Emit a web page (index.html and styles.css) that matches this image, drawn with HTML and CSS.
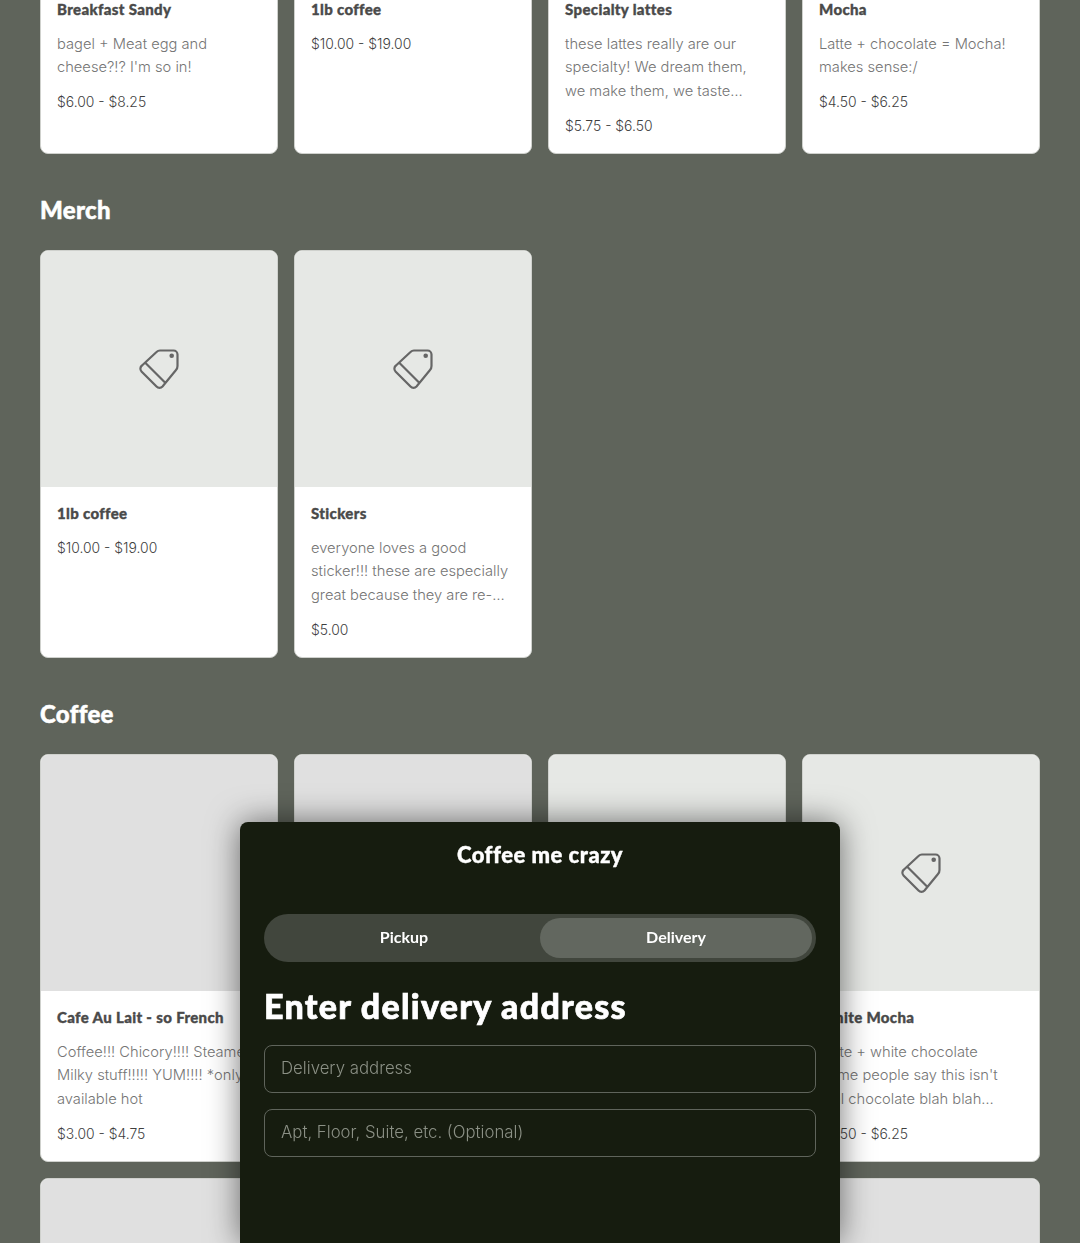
FILE: index.html
```html
<!DOCTYPE html>
<html lang="en">
<head>
    <meta charset="UTF-8">
    <meta name="viewport" content="width=device-width, initial-scale=1.0">
    <title>Coffee me crazy</title>
    <link rel="stylesheet" href="styles.css">
</head>
<body>
    <main class="menu">
        <section class="menu-section">
            <div class="item-grid">
                <div class="item-card">
                    <div class="item-image"></div>
                    <div class="item-body">
                        <h3 class="item-title">Breakfast Sandy</h3>
                        <p class="item-desc">bagel + Meat egg and<br>cheese?!? I'm so in!</p>
                        <div class="item-price">$6.00 - $8.25</div>
                    </div>
                </div>
                <div class="item-card">
                    <div class="item-image"></div>
                    <div class="item-body">
                        <h3 class="item-title">1lb coffee</h3>
                        <div class="item-price">$10.00 - $19.00</div>
                    </div>
                </div>
                <div class="item-card">
                    <div class="item-image"></div>
                    <div class="item-body">
                        <h3 class="item-title">Specialty lattes</h3>
                        <p class="item-desc">these lattes really are our<br>specialty! We dream them,<br>we make them, we taste…</p>
                        <div class="item-price">$5.75 - $6.50</div>
                    </div>
                </div>
                <div class="item-card">
                    <div class="item-image"></div>
                    <div class="item-body">
                        <h3 class="item-title">Mocha</h3>
                        <p class="item-desc">Latte + chocolate = Mocha!<br>makes sense:/</p>
                        <div class="item-price">$4.50 - $6.25</div>
                    </div>
                </div>
            </div>
        </section>

        <section class="menu-section">
            <h2 class="section-title">Merch</h2>
            <div class="item-grid">
                <div class="item-card">
                    <div class="item-image placeholder">
                        <svg class="tag-icon" viewBox="0 0 40 40"><path d="M3 16.5 17.5 3Q19 1.5 21 1.5H34.5A4 4 0 0 1 38.5 5.5V17Q38.5 19.5 37 21L23.5 37.5A4 4 0 0 1 17.5 37.5L2.5 22.5A4 4 0 0 1 3 16.5ZM6 13.5 26 33.5"/><circle cx="32.7" cy="6.7" r="1.2"/></svg>
                    </div>
                    <div class="item-body">
                        <h3 class="item-title">1lb coffee</h3>
                        <div class="item-price">$10.00 - $19.00</div>
                    </div>
                </div>
                <div class="item-card">
                    <div class="item-image placeholder">
                        <svg class="tag-icon" viewBox="0 0 40 40"><path d="M3 16.5 17.5 3Q19 1.5 21 1.5H34.5A4 4 0 0 1 38.5 5.5V17Q38.5 19.5 37 21L23.5 37.5A4 4 0 0 1 17.5 37.5L2.5 22.5A4 4 0 0 1 3 16.5ZM6 13.5 26 33.5"/><circle cx="32.7" cy="6.7" r="1.2"/></svg>
                    </div>
                    <div class="item-body">
                        <h3 class="item-title">Stickers</h3>
                        <p class="item-desc">everyone loves a good<br>sticker!!! these are especially<br>great because they are re-…</p>
                        <div class="item-price">$5.00</div>
                    </div>
                </div>
            </div>
        </section>

        <section class="menu-section">
            <h2 class="section-title">Coffee</h2>
            <div class="item-grid">
                <div class="item-card">
                    <div class="item-image"></div>
                    <div class="item-body">
                        <h3 class="item-title">Cafe Au Lait - so French</h3>
                        <p class="item-desc">Coffee!!! Chicory!!!! Steamed<br>Milky stuff!!!!! YUM!!!! *only<br>available hot</p>
                        <div class="item-price">$3.00 - $4.75</div>
                    </div>
                </div>
                <div class="item-card">
                    <div class="item-image"></div>
                </div>
                <div class="item-card">
                    <div class="item-image placeholder"></div>
                </div>
                <div class="item-card">
                    <div class="item-image placeholder">
                        <svg class="tag-icon" viewBox="0 0 40 40"><path d="M3 16.5 17.5 3Q19 1.5 21 1.5H34.5A4 4 0 0 1 38.5 5.5V17Q38.5 19.5 37 21L23.5 37.5A4 4 0 0 1 17.5 37.5L2.5 22.5A4 4 0 0 1 3 16.5ZM6 13.5 26 33.5"/><circle cx="32.7" cy="6.7" r="1.2"/></svg>
                    </div>
                    <div class="item-body">
                        <h3 class="item-title">White Mocha</h3>
                        <p class="item-desc">Latte + white chocolate<br>Some people say this isn't<br>real chocolate blah blah…</p>
                        <div class="item-price">$4.50 - $6.25</div>
                    </div>
                </div>
                <div class="item-card"><div class="item-image"></div></div>
                <div class="item-card"><div class="item-image"></div></div>
                <div class="item-card"><div class="item-image"></div></div>
                <div class="item-card"><div class="item-image"></div></div>
            </div>
        </section>
    </main>

    <div class="order-modal">
        <h2 class="modal-title">Coffee me crazy</h2>
        <div class="mode-toggle">
            <button class="mode-button">Pickup</button>
            <button class="mode-button active">Delivery</button>
        </div>
        <h1 class="modal-heading">Enter delivery address</h1>
        <input class="address-input" type="text" placeholder="Delivery address">
        <input class="address-input" type="text" placeholder="Apt, Floor, Suite, etc. (Optional)">
    </div>
</body>
</html>
```

FILE: styles.css
```css
:root {
    --page-bg: #5f645b;
    --modal-bg: #161c0f;
    --display-font: 'Lato', 'Noto Sans', sans-serif;
    --body-font: 'Inter', 'Noto Sans', sans-serif;
}

body {
    margin: 0;
    height: 100vh;
    overflow: hidden;
    background-color: var(--page-bg);
    font-family: var(--body-font);
}

/* page is scrolled, the first row starts above the window */
.menu {
    display: flex;
    flex-direction: column;
    gap: 40px;
    margin-top: -254px;
    padding: 0 40px;
}

.section-title {
    margin: 0 0 22px 0;
    height: 34px;
    font-family: var(--display-font);
    font-size: 24px;
    font-weight: 900;
    line-height: 32px;
    letter-spacing: 0.3px;
    -webkit-text-stroke: 0.5px #fff;
    color: #fff;
}

.item-grid {
    display: grid;
    grid-template-columns: repeat(4, 238px);
    gap: 16px;
}

.item-card {
    display: flex;
    flex-direction: column;
    min-height: 408px;
    box-sizing: border-box;
    background-color: #fff;
    border: 1px solid #cfd1cd;
    border-radius: 8px;
    overflow: hidden;
}

.item-image {
    display: flex;
    align-items: center;
    justify-content: center;
    height: 236px;
    flex-shrink: 0;
    background-color: #e0e0e0;
}

.item-image.placeholder {
    background-color: #e6e8e5;
}

.tag-icon {
    width: 40px;
    height: 40px;
    fill: none;
    stroke: #666;
    stroke-width: 2.2;
}

.item-body {
    padding: 15px 16px 15px 16px;
}

.item-title {
    margin: 0 0 12px 0;
    font-family: var(--display-font);
    font-size: 15px;
    font-weight: 900;
    line-height: 22px;
    letter-spacing: 0.35px;
    -webkit-text-stroke: 0.35px #4a4a4a;
    color: #4a4a4a;
}

.item-desc {
    margin: 0 0 10.7px 0;
    padding-top: 0.8px;
    font-size: 14.7px;
    font-weight: 300;
    line-height: 23.5px;
    white-space: nowrap;
    color: #757575;
}

.item-price {
    font-size: 13.9px;
    font-weight: 300;
    line-height: 24px;
    color: #3f3f3f;
}

.order-modal {
    position: fixed;
    left: 240px;
    top: 822px;
    bottom: 0;
    width: 600px;
    box-sizing: border-box;
    padding: 0 24px;
    background-color: var(--modal-bg);
    border-radius: 8px 8px 0 0;
    box-shadow: 0 0 32px rgba(0, 0, 0, 0.55);
}

.modal-title {
    margin: 21px 0 47px 0;
    font-family: var(--display-font);
    font-size: 22px;
    font-weight: 900;
    line-height: 24px;
    letter-spacing: 0.5px;
    -webkit-text-stroke: 0.4px #fff;
    text-align: center;
    color: #fff;
}

.mode-toggle {
    display: flex;
    height: 48px;
    box-sizing: border-box;
    padding: 4px;
    background-color: #41463d;
    border-radius: 24px;
}

.mode-button {
    flex: 1;
    padding: 0 0 3px 0;
    border: none;
    border-radius: 20px;
    background: none;
    font-family: var(--display-font);
    font-size: 16px;
    font-weight: 700;
    color: #fff;
}

.mode-button.active {
    background-color: #62675f;
}

.modal-heading {
    margin: 24px 0 19px 0;
    font-family: var(--display-font);
    font-size: 34px;
    font-weight: 900;
    line-height: 40px;
    letter-spacing: 1.25px;
    -webkit-text-stroke: 0.7px #fff;
    color: #fff;
}

.address-input {
    display: block;
    width: 100%;
    height: 48px;
    box-sizing: border-box;
    margin-bottom: 16px;
    padding: 0 16px 2px 16px;
    background: none;
    border: 1px solid #5f645b;
    border-radius: 8px;
    font-family: var(--body-font);
    font-size: 16.8px;
    font-weight: 300;
    color: #fff;
}

.address-input::placeholder {
    color: #8b9085;
    opacity: 1;
}
```
